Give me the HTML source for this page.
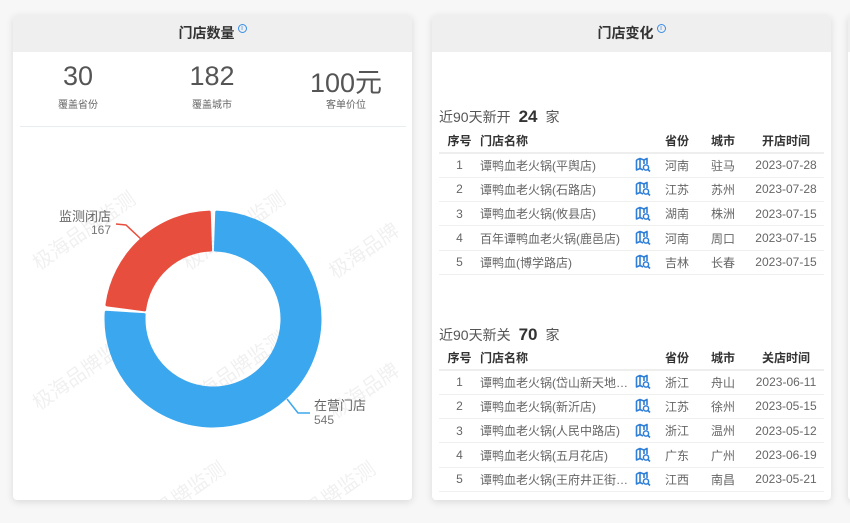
<!DOCTYPE html>
<html><head><meta charset="utf-8"><style>
*{margin:0;padding:0;box-sizing:border-box}
body{width:850px;height:523px;background:#f7f7f7;font-family:"Liberation Sans","Noto Sans CJK SC",sans-serif;position:relative;overflow:hidden;color:#555}
.card{position:absolute;top:15px;height:485px;background:#fff;border-radius:4px;box-shadow:0 2px 8px rgba(0,0,0,.12);overflow:hidden}
.hd{height:37px;background:#efefef;text-align:center;font-size:14px;font-weight:bold;color:#333;line-height:37px}
.hd sup{display:inline-block;width:9px;height:9px;border:1px solid #3a8ee6;border-radius:50%;font-size:7px;line-height:8px;color:#3a8ee6;vertical-align:top;margin-top:9px;margin-left:3px;font-weight:normal}
.stat{position:absolute;top:46px;width:130px;text-align:center}
.stat b{display:block;font-weight:normal;font-size:27px;color:#555;height:34px}
.stat span{font-size:10px;color:#666}
.wm{position:absolute;font-size:20px;color:rgba(0,0,0,.06);transform:rotate(-35deg);white-space:nowrap}
.t{position:absolute;left:7px;font-size:14px;color:#555}
.t b{font-size:17px;color:#333;margin:0 8px}
table{position:absolute;left:7px;width:385px;border-collapse:collapse;font-size:12px;color:#666}
th{font-weight:bold;color:#333;height:24px;text-align:center;border-bottom:2px solid #eee}
td{height:24.3px;text-align:center;border-bottom:1px solid #f0f0f0;white-space:nowrap}
td.n,th.n{text-align:left}
</style></head><body>
<div class="card" style="left:13px;width:399px">
 <div class="hd">门店数量<sup>i</sup></div>
 <div class="stat" style="left:0"><b>30</b><span>覆盖省份</span></div>
 <div class="stat" style="left:134px"><b>182</b><span>覆盖城市</span></div>
 <div class="stat" style="left:268px"><b>100元</b><span>客单价位</span></div>
 <div style="position:absolute;left:7px;top:111px;width:386px;height:1px;background:#e8eef0"></div>
 <div class="wm" style="left:10px;top:200px">极海品牌监测</div>
 <div class="wm" style="left:160px;top:200px">极海品牌监测</div>
 <div class="wm" style="left:310px;top:220px">极海品牌</div>
 <div class="wm" style="left:10px;top:340px">极海品牌监测</div>
 <div class="wm" style="left:160px;top:340px">极海品牌监测</div>
 <div class="wm" style="left:310px;top:360px">极海品牌</div>
 <div class="wm" style="left:100px;top:470px">极海品牌监测</div>
 <div class="wm" style="left:250px;top:470px">极海品牌监测</div>
 <svg style="position:absolute;left:-13px;top:-15px" width="425" height="500">
  <path d="M216.73,212.07 A107,107 0 1 1 106.21,312.28 L144.14,314.67 A69,69 0 1 0 215.41,250.04 Z" fill="#3ba7ee" stroke="#3ba7ee" stroke-width="3" stroke-linejoin="round"/>
  <path d="M106.94,304.85 A107,107 0 0 1 209.27,212.07 L210.59,250.04 A69,69 0 0 0 144.61,309.87 Z" fill="#e84e3d" stroke="#e84e3d" stroke-width="3" stroke-linejoin="round"/>
  <path d="M116,224 L126,225 L142,240" fill="none" stroke="#e84e3d" stroke-width="1.5"/>
  <path d="M287,399 L298,413 L310,413" fill="none" stroke="#3ba7ee" stroke-width="1.5"/>
  <text x="111" y="221" font-size="13" fill="#666" text-anchor="end" font-family="Liberation Sans,Noto Sans CJK SC,sans-serif">监测闭店</text>
  <text x="111" y="234" font-size="12" fill="#777" text-anchor="end" font-family="Liberation Sans,sans-serif">167</text>
  <text x="314" y="410" font-size="13" fill="#666" font-family="Liberation Sans,Noto Sans CJK SC,sans-serif">在营门店</text>
  <text x="314" y="424" font-size="12" fill="#777" font-family="Liberation Sans,sans-serif">545</text>
 </svg>
</div>
<div class="card" style="left:432px;width:399px">
 <div class="hd">门店变化<sup>i</sup></div>
 <div class="t" style="top:92px">近90天新开<b>24</b>家</div>
 <table style="top:114px">
  <tr><th style="width:41px">序号</th><th class="n" style="width:150px">门店名称</th><th style="width:26px"></th><th style="width:42px">省份</th><th style="width:50px">城市</th><th>开店时间</th></tr>
  <tr><td>1</td><td class="n">谭鸭血老火锅(平舆店)</td><td>I</td><td>河南</td><td>驻马</td><td>2023-07-28</td></tr>
  <tr><td>2</td><td class="n">谭鸭血老火锅(石路店)</td><td>I</td><td>江苏</td><td>苏州</td><td>2023-07-28</td></tr>
  <tr><td>3</td><td class="n">谭鸭血老火锅(攸县店)</td><td>I</td><td>湖南</td><td>株洲</td><td>2023-07-15</td></tr>
  <tr><td>4</td><td class="n">百年谭鸭血老火锅(鹿邑店)</td><td>I</td><td>河南</td><td>周口</td><td>2023-07-15</td></tr>
  <tr><td>5</td><td class="n">谭鸭血(博学路店)</td><td>I</td><td>吉林</td><td>长春</td><td>2023-07-15</td></tr>
 </table>
 <div class="t" style="top:310px">近90天新关<b>70</b>家</div>
 <table style="top:331px">
  <tr><th style="width:41px">序号</th><th class="n" style="width:150px">门店名称</th><th style="width:26px"></th><th style="width:42px">省份</th><th style="width:50px">城市</th><th>关店时间</th></tr>
  <tr><td>1</td><td class="n">谭鸭血老火锅(岱山新天地…</td><td>I</td><td>浙江</td><td>舟山</td><td>2023-06-11</td></tr>
  <tr><td>2</td><td class="n">谭鸭血老火锅(新沂店)</td><td>I</td><td>江苏</td><td>徐州</td><td>2023-05-15</td></tr>
  <tr><td>3</td><td class="n">谭鸭血老火锅(人民中路店)</td><td>I</td><td>浙江</td><td>温州</td><td>2023-05-12</td></tr>
  <tr><td>4</td><td class="n">谭鸭血老火锅(五月花店)</td><td>I</td><td>广东</td><td>广州</td><td>2023-06-19</td></tr>
  <tr><td>5</td><td class="n">谭鸭血老火锅(王府井正街…</td><td>I</td><td>江西</td><td>南昌</td><td>2023-05-21</td></tr>
 </table>
</div>
<div class="card" style="left:848px;width:20px"><div class="hd"></div></div>
<script>
document.querySelectorAll('td').forEach(function(td){if(td.textContent==='I'){td.innerHTML='<svg width="16" height="16" viewBox="0 0 16 16" style="vertical-align:middle"><path d="M1.5 3 L5 1.5 L9 3 L12 1.5 V7 M1.5 3 V13 L5 11.5 L8 13 M5 1.5 V11.5 M9 3 V7" fill="none" stroke="#2f7fd6" stroke-width="1.6" stroke-linejoin="round"/><circle cx="11" cy="10.5" r="2.6" fill="none" stroke="#2f7fd6" stroke-width="1.5"/><path d="M13 12.5 L15 14.5" stroke="#2f7fd6" stroke-width="1.6"/></svg>';}});
</script>
</body></html>
